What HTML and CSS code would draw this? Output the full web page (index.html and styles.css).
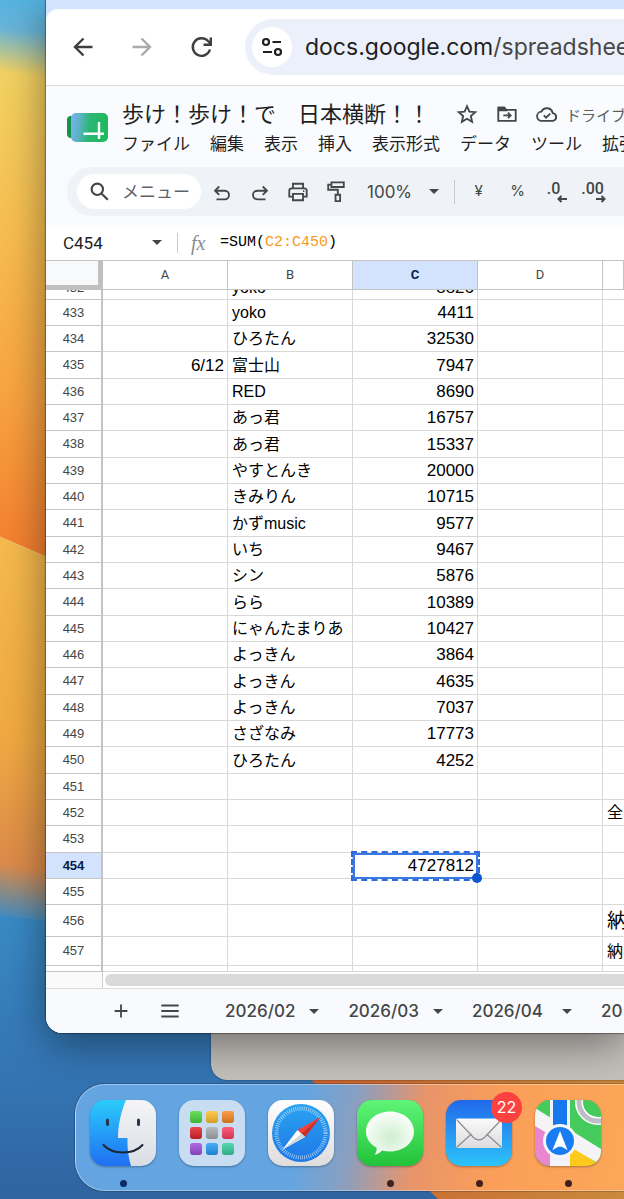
FILE: index.html
```html
<!DOCTYPE html>
<html lang="ja">
<head>
    <meta charset="UTF-8">
    <meta name="viewport" content="width=device-width, initial-scale=1.0">
    <title>歩け!歩け!で 日本横断!!</title>
    <link rel="stylesheet" href="styles.css">
</head>
<body>
    <div class="desktop">
        <svg class="wallpaper" viewBox="0 0 624 1199" preserveAspectRatio="none" aria-hidden="true">
            <defs>
                <linearGradient id="wpTop" gradientUnits="userSpaceOnUse" x1="0" y1="0" x2="-60" y2="550">
                    <stop offset="0" stop-color="#56b4e2"/>
                    <stop offset=".05" stop-color="#69b4d8"/>
                    <stop offset=".13" stop-color="#f3d262"/>
                    <stop offset=".4" stop-color="#f8bf52"/>
                    <stop offset=".7" stop-color="#f9a542"/>
                    <stop offset="1" stop-color="#f57e2e"/>
                </linearGradient>
                <linearGradient id="wpMid" gradientUnits="userSpaceOnUse" x1="0" y1="540" x2="-60" y2="920">
                    <stop offset="0" stop-color="#f6ba4e"/>
                    <stop offset=".5" stop-color="#f1aa42"/>
                    <stop offset=".83" stop-color="#dc8b4a"/>
                    <stop offset=".97" stop-color="#3f8dc3"/>
                    <stop offset="1" stop-color="#3a8dc8"/>
                </linearGradient>
                <linearGradient id="wpBlue" gradientUnits="userSpaceOnUse" x1="0" y1="900" x2="0" y2="1199">
                    <stop offset="0" stop-color="#3a8dc8"/>
                    <stop offset=".5" stop-color="#3578b7"/>
                    <stop offset="1" stop-color="#2f64a0"/>
                </linearGradient>
                <linearGradient id="wpOrange" x1="0" y1="0" x2="1" y2="0">
                    <stop offset="0" stop-color="#c9602f"/>
                    <stop offset="1" stop-color="#c98a3c"/>
                </linearGradient>
            </defs>
            <rect width="624" height="1199" fill="url(#wpBlue)"/>
            <path d="M0 537L624 800V1000L0 915z" fill="url(#wpMid)"/>
            <path d="M0 0H624V800L0 537z" fill="url(#wpTop)"/>
            <path d="M0 537L60 563" stroke="#fbc463" stroke-width="1"/>
            <path d="M290 1060L438 1199H624V1060z" fill="url(#wpOrange)"/>
        </svg>

        <div class="windows">
            <div class="back-window"></div>

            <main class="window">
                <div class="tab-strip"></div>
                <nav class="browser-bar">
                    <div class="nav-buttons">
                        <button class="nav-btn" aria-label="戻る">
                            <svg viewBox="0 0 24 24"><path d="M21.500 12H4M12.500 3.500L4 12l8.500 8.500"/></svg>
                        </button>
                        <button class="nav-btn disabled" aria-label="進む" disabled>
                            <svg viewBox="0 0 24 24"><path d="M2.500 12H20M11.500 3.500L20 12l-8.500 8.500"/></svg>
                        </button>
                        <button class="nav-btn" aria-label="再読み込み">
                            <svg viewBox="0 0 24 24"><path d="M21 14.500A8.800 8.800 0 1 1 19 6L21.500 8.500M21.800 2.500v7.300h-7.300"/></svg>
                        </button>
                    </div>
                    <div class="omnibox">
                        <button class="site-info" aria-label="サイト情報">
                            <svg viewBox="0 0 24 24"><circle cx="6" cy="7" r="3"/><path d="M12.500 7H21M3 17h9"/><circle cx="18" cy="17" r="3"/></svg>
                        </button>
                        <a class="url" href="#">docs.google.com<span>/spreadshee</span></a>
                    </div>
                </nav>

                <header class="doc-header">
                    <div class="doc-top">
                        <svg class="app-icon" viewBox="0 0 42 30" aria-hidden="true">
                            <defs>
                                <linearGradient id="sheetFill" x1="0" y1=".4" x2="1" y2=".5">
                                    <stop offset="0" stop-color="#74b3ee"/>
                                    <stop offset=".22" stop-color="#5cb3c4"/>
                                    <stop offset=".5" stop-color="#2cb673"/>
                                    <stop offset="1" stop-color="#1dba5c"/>
                                </linearGradient>
                            </defs>
                            <rect x="0" y="3" width="12" height="22" rx="4" fill="#16914a"/>
                            <rect x="4" y="0" width="37" height="29" rx="5" fill="url(#sheetFill)"/>
                            <path d="M16.500 20.800H37M32 9v17" fill="none" stroke="#fff" stroke-width="2.400"/>
                        </svg>
                        <div class="doc-info">
                            <div class="title-row">
                                <h1>歩け！歩け！で　日本横断！！</h1>
                                <button class="icon-btn" aria-label="スター">
                                    <svg viewBox="0 0 24 24"><path d="M12 3.500l2.600 5.900 6.400.6-4.800 4.200 1.400 6.300-5.600-3.300-5.600 3.300 1.400-6.300L3 10l6.400-.6z"/></svg>
                                </button>
                                <button class="icon-btn" aria-label="移動">
                                    <svg viewBox="0 0 24 24"><path d="M2.500 5h6.500l2 2.500h10.500v12h-19z"/><path d="M3 5h6l2 3H3z" fill="#444746"/><path d="M8 13.500h8M13 10.500l3 3-3 3"/></svg>
                                </button>
                                <button class="save-btn">
                                    <svg viewBox="0 0 24 24"><path d="M6.500 19.500a5 5 0 0 1-.6-10 6.500 6.500 0 0 1 12.300 1.500 4.300 4.300 0 0 1 .3 8.500z"/><path d="M8.500 13.500l2.500 2.500 4.500-4.500"/></svg>
                                    ドライブ
                                </button>
                            </div>
                            <div class="menu-row">
                                <a href="#">ファイル</a>
                                <a href="#">編集</a>
                                <a href="#">表示</a>
                                <a href="#">挿入</a>
                                <a href="#">表示形式</a>
                                <a href="#">データ</a>
                                <a href="#">ツール</a>
                                <a href="#">拡張</a>
                            </div>
                        </div>
                    </div>

                    <div class="toolbar">
                        <label class="menu-search">
                            <svg viewBox="0 0 24 24"><circle cx="9.500" cy="9.500" r="6.500"/><path d="M14.500 14.500l7 7"/></svg>
                            <input type="text" placeholder="メニュー">
                        </label>
                        <div class="tool-group">
                            <button class="icon-btn" aria-label="元に戻す">
                                <svg viewBox="0 0 24 24"><path d="M6 20h9a4.700 4.700 0 0 0 0-9.400H5M9 6L4.400 10.600 9 15.200"/></svg>
                            </button>
                            <button class="icon-btn" aria-label="やり直し">
                                <svg viewBox="0 0 24 24"><path d="M18 20H9a4.700 4.700 0 0 1 0-9.400h10M15 6l4.600 4.600L15 15.200"/></svg>
                            </button>
                            <button class="icon-btn" aria-label="印刷">
                                <svg viewBox="0 0 24 24"><path d="M6.500 8V3h11v5M6.500 17H2.500v-6.500A2.500 2.500 0 0 1 5 8h14a2.500 2.500 0 0 1 2.500 2.500V17h-4M6.500 14h11v7h-11z"/><path d="M17.500 11h1.500"/></svg>
                            </button>
                            <button class="icon-btn" aria-label="書式を貼り付け">
                                <svg viewBox="0 0 24 24"><path d="M7 1.500h13.500v5H7zM7 4H3.500v5.500H14V15M11.500 15h5v7h-5z"/></svg>
                            </button>
                        </div>
                        <button class="zoom-btn">100% <i class="caret"></i></button>
                        <div class="divider"></div>
                        <div class="format-group">
                            <button>¥</button>
                            <button>%</button>
                            <button class="decimal" aria-label="小数点以下の桁数を減らす">.0
                                <svg viewBox="0 0 10 8"><path d="M10 4H1.500M4.500 1L1.500 4l3 3"/></svg>
                            </button>
                            <button class="decimal" aria-label="小数点以下の桁数を増やす">.00
                                <svg viewBox="0 0 10 8"><path d="M0 4h8.500M5.500 1l3 3-3 3"/></svg>
                            </button>
                        </div>
                    </div>
                </header>

                <div class="formula-bar">
                    <input class="name-box" type="text" value="C454" aria-label="名前ボックス">
                    <i class="caret"></i>
                    <div class="divider"></div>
                    <span class="fx">fx</span>
                    <code class="formula">=SUM(<span>C2:C450</span>)</code>
                </div>

                <table class="sheet">
                    <colgroup>
                        <col class="col-num">
                        <col class="col-data">
                        <col class="col-data">
                        <col class="col-data">
                        <col class="col-data">
                        <col>
                    </colgroup>
                    <thead>
                        <tr><th class="corner"></th><th>A</th><th>B</th><th class="active">C</th><th>D</th><th></th></tr>
                    </thead>
                    <tbody>
                        <tr class="cut"><th><div>432</div></th><td></td><td><div>yoko</div></td><td><div>8826</div></td><td></td><td></td></tr>
                        <tr><th>433</th><td></td><td>yoko</td><td>4411</td><td></td><td></td></tr>
                        <tr><th>434</th><td></td><td>ひろたん</td><td>32530</td><td></td><td></td></tr>
                        <tr><th>435</th><td>6/12</td><td>富士山</td><td>7947</td><td></td><td></td></tr>
                        <tr><th>436</th><td></td><td>RED</td><td>8690</td><td></td><td></td></tr>
                        <tr><th>437</th><td></td><td>あっ君</td><td>16757</td><td></td><td></td></tr>
                        <tr><th>438</th><td></td><td>あっ君</td><td>15337</td><td></td><td></td></tr>
                        <tr><th>439</th><td></td><td>やすとんき</td><td>20000</td><td></td><td></td></tr>
                        <tr><th>440</th><td></td><td>きみりん</td><td>10715</td><td></td><td></td></tr>
                        <tr><th>441</th><td></td><td>かずmusic</td><td>9577</td><td></td><td></td></tr>
                        <tr><th>442</th><td></td><td>いち</td><td>9467</td><td></td><td></td></tr>
                        <tr><th>443</th><td></td><td>シン</td><td>5876</td><td></td><td></td></tr>
                        <tr><th>444</th><td></td><td>らら</td><td>10389</td><td></td><td></td></tr>
                        <tr><th>445</th><td></td><td>にゃんたまりあ</td><td>10427</td><td></td><td></td></tr>
                        <tr><th>446</th><td></td><td>よっきん</td><td>3864</td><td></td><td></td></tr>
                        <tr><th>447</th><td></td><td>よっきん</td><td>4635</td><td></td><td></td></tr>
                        <tr><th>448</th><td></td><td>よっきん</td><td>7037</td><td></td><td></td></tr>
                        <tr><th>449</th><td></td><td>さざなみ</td><td>17773</td><td></td><td></td></tr>
                        <tr><th>450</th><td></td><td>ひろたん</td><td>4252</td><td></td><td></td></tr>
                        <tr><th>451</th><td></td><td></td><td></td><td></td><td></td></tr>
                        <tr><th>452</th><td></td><td></td><td></td><td></td><td>全</td></tr>
                        <tr><th>453</th><td></td><td></td><td></td><td></td><td></td></tr>
                        <tr><th class="active">454</th><td></td><td></td><td class="selected">4727812<i class="selection"></i></td><td></td><td></td></tr>
                        <tr><th>455</th><td></td><td></td><td></td><td></td><td></td></tr>
                        <tr class="tall"><th>456</th><td></td><td></td><td></td><td></td><td class="large">納</td></tr>
                        <tr class="medium"><th>457</th><td></td><td></td><td></td><td></td><td>納</td></tr>
                        <tr class="last"><th></th><td></td><td></td><td></td><td></td><td></td></tr>
                    </tbody>
                </table>

                <div class="scroll-row">
                    <div class="scroll-corner"></div>
                    <div class="scroll-thumb"></div>
                </div>

                <footer class="sheet-tabs">
                    <button class="icon-btn" aria-label="シートを追加">
                        <svg viewBox="0 0 24 24"><path d="M12 5v14M5 12h14"/></svg>
                    </button>
                    <button class="icon-btn" aria-label="すべてのシート">
                        <svg viewBox="0 0 24 24"><path d="M2.500 6h19M2.500 12h19M2.500 18h19"/></svg>
                    </button>
                    <div class="tab-list">
                        <button class="tab">2026/02 <i class="caret"></i></button>
                        <button class="tab">2026/03 <i class="caret"></i></button>
                        <button class="tab wide">2026/04 <i class="caret"></i></button>
                        <button class="tab">20</button>
                    </div>
                </footer>
            </main>
        </div>

        <nav class="dock">
            <button class="app running" aria-label="Finder">
                <svg viewBox="0 0 66 66">
                    <defs>
                        <linearGradient id="finderBlue" x1="0" y1="0" x2="0" y2="1"><stop offset="0" stop-color="#2bcbfb"/><stop offset="1" stop-color="#1f6ff2"/></linearGradient>
                        <linearGradient id="finderWhite" x1="0" y1="0" x2="0" y2="1"><stop offset="0" stop-color="#f5f5f7"/><stop offset="1" stop-color="#d9dde4"/></linearGradient>
                        <clipPath id="tile"><rect width="66" height="66" rx="15"/></clipPath>
                    </defs>
                    <g clip-path="url(#tile)">
                        <rect width="66" height="66" fill="url(#finderBlue)"/>
                        <path d="M36 0C31 12 28 25 28 38h9.500c-.5 10 1 20 3.500 28h25V0z" fill="url(#finderWhite)"/>
                    </g>
                    <path d="M17.500 20v4.500M48.500 20v4.500" stroke="#23364b" stroke-width="3" stroke-linecap="round"/>
                    <path d="M13.500 45c9 10 30 10 39 0" fill="none" stroke="#1b2735" stroke-width="2" stroke-linecap="round"/>
                </svg>
            </button>
            <button class="app" aria-label="Launchpad">
                <svg viewBox="0 0 66 66">
                    <defs>
                        <linearGradient id="lpShade" x1="0" y1="0" x2="0" y2="1"><stop offset="0" stop-color="#fff" stop-opacity=".15"/><stop offset="1" stop-color="#000" stop-opacity=".18"/></linearGradient>
                    </defs>
                    <rect width="66" height="66" rx="15" fill="#c8dcf2"/>
                    <rect x="11" y="11" width="12" height="12" rx="3" fill="#4cd83f"/>
                    <rect x="27" y="11" width="12" height="12" rx="3" fill="#fdc02e"/>
                    <rect x="43" y="11" width="12" height="12" rx="3" fill="#f88a25"/>
                    <rect x="11" y="27" width="12" height="12" rx="3" fill="#e0242a"/>
                    <rect x="27" y="27" width="12" height="12" rx="3" fill="#a9adb0"/>
                    <rect x="43" y="27" width="12" height="12" rx="3" fill="#fb3f62"/>
                    <rect x="11" y="43" width="12" height="12" rx="3" fill="#a14fdc"/>
                    <rect x="27" y="43" width="12" height="12" rx="3" fill="#259cf5"/>
                    <rect x="43" y="43" width="12" height="12" rx="3" fill="#38cfa0"/>
                    <g fill="url(#lpShade)">
                        <rect x="11" y="11" width="12" height="12" rx="3"/><rect x="27" y="11" width="12" height="12" rx="3"/><rect x="43" y="11" width="12" height="12" rx="3"/>
                        <rect x="11" y="27" width="12" height="12" rx="3"/><rect x="27" y="27" width="12" height="12" rx="3"/><rect x="43" y="27" width="12" height="12" rx="3"/>
                        <rect x="11" y="43" width="12" height="12" rx="3"/><rect x="27" y="43" width="12" height="12" rx="3"/><rect x="43" y="43" width="12" height="12" rx="3"/>
                    </g>
                </svg>
            </button>
            <button class="app" aria-label="Safari">
                <svg viewBox="0 0 66 66">
                    <defs>
                        <linearGradient id="safariDial" x1="0" y1="0" x2="0" y2="1"><stop offset="0" stop-color="#2ba3f0"/><stop offset="1" stop-color="#1d77e6"/></linearGradient>
                        <linearGradient id="safariTile" x1="0" y1="0" x2="0" y2="1"><stop offset="0" stop-color="#fff"/><stop offset="1" stop-color="#dedcdc"/></linearGradient>
                    </defs>
                    <rect width="66" height="66" rx="15" fill="url(#safariTile)"/>
                    <circle cx="33" cy="33" r="29" fill="url(#safariDial)"/>
                    <circle cx="33" cy="33" r="24.500" fill="none" stroke="#d6ecff" stroke-width="4" stroke-dasharray=".8 1.338" opacity=".75"/>
                    <path d="M52.500 17L37 37l-7.500-7z" fill="#f2403a"/>
                    <path d="M52.500 17L37 37l-3.500-3.500z" fill="#c92f2f"/>
                    <path d="M14.500 49.500L29.500 30l7.500 7z" fill="#fff"/>
                    <path d="M14.500 49.500l19-16L37 37z" fill="#cfd6dd"/>
                </svg>
            </button>
            <button class="app running" aria-label="メッセージ">
                <svg viewBox="0 0 66 66">
                    <defs>
                        <linearGradient id="msgTile" x1="0" y1="0" x2="0" y2="1"><stop offset="0" stop-color="#5ff577"/><stop offset="1" stop-color="#22c23a"/></linearGradient>
                        <radialGradient id="msgBubble" cx=".5" cy=".6" r=".6"><stop offset="0" stop-color="#cfeecf"/><stop offset="1" stop-color="#fbfffb"/></radialGradient>
                    </defs>
                    <rect width="66" height="66" rx="15" fill="url(#msgTile)"/>
                    <path d="M33 11.500c13.500 0 24 8.800 24 20s-10.500 20-24 20c-2.800 0-5.500-.4-8-1.100-1.800 2-4.500 3.800-7.500 4.200 1.800-2 2.500-4.500 2-7C12.800 44 9 38.200 9 31.500c0-11.200 10.500-20 24-20z" fill="url(#msgBubble)"/>
                </svg>
            </button>
            <button class="app running mail" aria-label="メール">
                <svg viewBox="0 0 66 66">
                    <defs>
                        <linearGradient id="mailTile" x1="0" y1="0" x2="0" y2="1"><stop offset="0" stop-color="#2169ea"/><stop offset="1" stop-color="#2cc4fa"/></linearGradient>
                        <linearGradient id="mailPaper" x1="0" y1="0" x2="0" y2="1"><stop offset="0" stop-color="#fafafa"/><stop offset="1" stop-color="#dcdcde"/></linearGradient>
                    </defs>
                    <rect width="66" height="66" rx="15" fill="url(#mailTile)"/>
                    <rect x="10" y="18.500" width="46" height="29.500" rx="2" fill="url(#mailPaper)"/>
                    <path d="M11 47l14.500-13M55 47L40.500 34M11 20l16.500 17.500c3.500 3 7.500 3 11 0L55 20" fill="none" stroke="#8b8d91" stroke-width="1.200"/>
                </svg>
                <span class="badge">22</span>
            </button>
            <button class="app running" aria-label="マップ">
                <svg viewBox="0 0 66 66">
                    <g clip-path="url(#tile)">
                        <rect width="66" height="66" fill="#45cb5c"/>
                        <path d="M0 24L15 34V66H0z" fill="#e887cf"/>
                        <path d="M34 66V44L66 66z" fill="#fdca1c"/>
                        <path d="M0 8L66 49v16L0 26z" fill="#f4f4f6"/>
                        <path d="M15 0h20v66H15z" fill="#f1f3f8"/>
                        <path d="M18 0h14v34H18z" fill="#1778ee"/>
                        <circle cx="63" cy="2" r="19" fill="none" stroke="#fff" stroke-width="8"/>
                        <circle cx="63" cy="2" r="19" fill="none" stroke="#bcbfc6" stroke-width="5"/>
                        <circle cx="25" cy="41" r="17" fill="#f5f5f7"/>
                        <circle cx="25" cy="41" r="14" fill="#1a7cf2"/>
                        <path d="M25 31l7.500 19c-2-.4-4.500-3.500-7.500-3.500s-5.500 3.100-7.500 3.500z" fill="#fff"/>
                    </g>
                </svg>
            </button>
        </nav>
    </div>
</body>
</html>
```
FILE: styles.css
```css
* {
    margin: 0;
    padding: 0;
    box-sizing: border-box;
}

body {
    font-family: Inter, "Noto Sans CJK JP", sans-serif;
    color: #1f1f1f;
}

button {
    border: none;
    background: none;
    font: inherit;
    color: inherit;
    cursor: pointer;
}

input {
    border: none;
    outline: none;
    background: none;
    font: inherit;
    color: inherit;
}

a {
    color: inherit;
    text-decoration: none;
}

svg {
    display: block;
}

/* デスクトップ */
.desktop {
    position: relative;
    min-height: 100vh;
    padding-bottom: 8px;
    overflow: hidden;
}

.wallpaper {
    position: absolute;
    inset: 0;
    width: 100%;
    height: 100%;
}

.windows {
    position: relative;
    padding-left: 46px;
}

.back-window {
    position: absolute;
    left: 211px;
    right: 0;
    bottom: -47px;
    height: 120px;
    background: #c4c0bc;
    border-radius: 0 0 0 16px;
    box-shadow: 0 0 2px rgba(0, 0, 0, 0.6);
}

.windows::before {
    content: "";
    position: absolute;
    inset: 0 0 0 46px;
    z-index: 1;
    border-radius: 0 0 0 16px;
    box-shadow: 0 0 1px 1px rgba(0, 0, 0, 0.35), 0 10px 44px rgba(0, 0, 0, 0.45);
}

.window {
    position: relative;
    z-index: 2;
    overflow: hidden;
    background: #fff;
    border-radius: 0 0 0 16px;
}

/* ブラウザ */
.tab-strip {
    height: 20px;
    margin-bottom: -11px;
    background: #d3e3fd;
}

.browser-bar {
    position: relative;
    display: flex;
    align-items: center;
    gap: 32px;
    height: 77px;
    padding-left: 25px;
    background: #fff;
    border-bottom: 1px solid #d8dade;
    border-radius: 12px 0 0 0;
}

.nav-buttons {
    display: flex;
    gap: 35px;
}

.nav-btn svg {
    width: 24px;
    height: 24px;
    fill: none;
    stroke: #3c4043;
    stroke-width: 2.4;
}

.nav-btn.disabled svg {
    stroke: #a8aaac;
}

.omnibox {
    flex: 1;
    display: flex;
    align-items: center;
    gap: 13px;
    height: 56px;
    padding-left: 7px;
    overflow: hidden;
    background: #ecf0fa;
    border-radius: 28px 0 0 28px;
}

.site-info {
    flex: none;
    display: grid;
    place-items: center;
    width: 40px;
    height: 40px;
    background: #fff;
    border-radius: 50%;
}

.site-info svg {
    width: 24px;
    height: 24px;
    fill: none;
    stroke: #1f1f1f;
    stroke-width: 2.2;
}

.url {
    font-size: 23px;
    white-space: nowrap;
}

.url span {
    color: #474747;
}

/* ドキュメントヘッダー */
.doc-header {
    padding: 13px 0 9px 21px;
    background: #f9fbfe;
}

.doc-top {
    display: flex;
    gap: 13px;
    margin-bottom: 10px;
}

.app-icon {
    flex: none;
    width: 42px;
    height: 30px;
    margin-top: 14px;
}

.doc-info {
    flex: 1;
    min-width: 0;
    overflow: hidden;
}

.title-row {
    display: flex;
    align-items: center;
    gap: 18px;
    height: 30px;
    margin-bottom: 2px;
    white-space: nowrap;
}

h1 {
    margin-right: 8px;
    padding-bottom: 4px;
    font-size: 22px;
    font-weight: 400;
    line-height: 26px;
    font-family: "Noto Sans CJK JP", sans-serif;
}

.icon-btn svg,
.save-btn svg {
    width: 22px;
    height: 22px;
    fill: none;
    stroke: #444746;
    stroke-width: 2;
}

.save-btn {
    display: flex;
    align-items: center;
    gap: 8px;
    font-size: 15px;
    color: #5a5d5c;
}

.menu-row {
    display: flex;
    gap: 20px;
    height: 26px;
    font-size: 17px;
    line-height: 26px;
    white-space: nowrap;
}

.toolbar {
    display: flex;
    align-items: center;
    height: 49px;
    padding-left: 10px;
    overflow: hidden;
    background: #eff3f8;
    border-radius: 25px 0 0 25px;
    color: #444746;
}

.menu-search {
    flex: none;
    display: flex;
    align-items: center;
    gap: 12px;
    width: 124px;
    height: 35px;
    margin-right: 10px;
    padding-left: 12px;
    background: #fff;
    border-radius: 18px;
}

.menu-search svg {
    flex: none;
    width: 21px;
    height: 21px;
    fill: none;
    stroke: #444746;
    stroke-width: 2.4;
}

.menu-search input {
    width: 76px;
    font-size: 17px;
}

.menu-search input::placeholder {
    color: #5f6368;
}

.tool-group {
    display: flex;
    gap: 16px;
    margin-right: 20px;
}

.zoom-btn {
    display: flex;
    align-items: center;
    gap: 17px;
    margin-right: 15px;
    font-size: 17px;
}

.caret {
    width: 0;
    height: 0;
    border: 5px solid transparent;
    border-top-color: #444746;
    border-bottom: none;
}

.divider {
    flex: none;
    width: 1px;
    height: 24px;
    background: #c7cacf;
}

.format-group {
    display: flex;
    align-items: center;
    margin-left: 4px;
    font-size: 15px;
}

.format-group button {
    position: relative;
    width: 39px;
    height: 30px;
    padding-bottom: 2px;
}

.format-group .decimal {
    padding: 0 6px 6px 0;
    font-family: Roboto, sans-serif;
    font-size: 16px;
    font-weight: 500;
}

.decimal svg {
    position: absolute;
    right: 9px;
    bottom: 4px;
    width: 10px;
    height: 8px;
    fill: none;
    stroke: #444746;
    stroke-width: 2;
}

/* 数式バー */
.formula-bar {
    display: flex;
    align-items: center;
    height: 35px;
    padding-left: 17px;
}

.name-box {
    width: 89px;
    font-family: Roboto, sans-serif;
    font-size: 17px;
}

.formula-bar .divider {
    height: 20px;
    margin: 0 13px 0 15px;
}

.fx {
    width: 29px;
    font-family: "Liberation Serif", serif;
    font-size: 20px;
    font-style: italic;
    line-height: 20px;
    color: #8a8d90;
}

.formula {
    font-family: "Liberation Mono", monospace;
    font-size: 15px;
    color: #000;
}

.formula span {
    color: #f7981d;
}

/* シート */
.sheet {
    width: 100%;
    table-layout: fixed;
    border-collapse: separate;
    border-spacing: 0;
    font-family: "Liberation Sans", "Noto Sans CJK JP", sans-serif;
    color: #000;
}

.col-num {
    width: 57px;
}

.col-data {
    width: 125px;
}

.sheet th {
    font-size: 13px;
    font-weight: 400;
    line-height: 18px;
    color: #444746;
    border-right: 1px solid #c4c4c4;
    border-bottom: 1px solid #c4c4c4;
}

.sheet thead th {
    height: 30px;
    font-family: Roboto, sans-serif;
    border-top: 1px solid #c4c4c4;
}

.sheet thead .corner {
    background: #f8f9fa;
    background-clip: padding-box;
    border-right: 5px solid #c0c0c0;
    border-bottom: 5px solid #c0c0c0;
}

.sheet tbody th {
    border-right: 2px solid #c4c4c4;
}

.sheet .active {
    background: #d3e3fd;
    color: #041e49;
    font-weight: 700;
}

.sheet td {
    padding: 1px 3px 0 4px;
    border-right: 1px solid #d8d8d8;
    border-bottom: 1px solid #d8d8d8;
    font-size: 16px;
    line-height: 20px;
    white-space: nowrap;
    overflow: hidden;
}

.sheet td:nth-child(2),
.sheet td:nth-child(4) {
    font-size: 17px;
    text-align: right;
}

.sheet td:last-child {
    padding-right: 0;
    border-right: none;
}

.sheet tbody tr {
    height: 26px;
}

.sheet tbody tr:not([class]):nth-child(3n + 1) {
    height: 27px;
}

.sheet tbody .cut {
    height: 10px;
}

.sheet .cut td {
    padding-top: 0;
    padding-bottom: 0;
}

/* 見出しの下に隠れた行 */
.cut div {
    display: flex;
    flex-direction: column;
    justify-content: flex-end;
    height: 9px;
    line-height: 22px;
    overflow: hidden;
}

.sheet tbody .tall {
    height: 32px;
}

.sheet tbody .medium {
    height: 29px;
}

.sheet tbody .last {
    height: 6px;
}

.sheet .large {
    font-size: 20px;
}

.sheet .selected {
    position: relative;
    overflow: visible;
}

.selection {
    position: absolute;
    inset: 0 -1px -1px 0;
    border: 2px solid #3b78e7;
    outline: 2px dashed #2f6bd8;
}

.selection::after {
    content: "";
    position: absolute;
    right: -6px;
    bottom: -6px;
    width: 10px;
    height: 10px;
    background: #0b57d0;
    border-radius: 50%;
}

.scroll-row {
    display: flex;
    align-items: center;
    gap: 2px;
    height: 17px;
    border-bottom: 1px solid #dcdcdc;
}

.scroll-corner {
    width: 57px;
    height: 100%;
    background: #fafafa;
    border-right: 1px solid #d0d0d0;
}

.scroll-thumb {
    flex: 1;
    height: 12px;
    background: #dadada;
    border-radius: 6px 0 0 6px;
}

.sheet-tabs {
    display: flex;
    align-items: center;
    gap: 27px;
    height: 44px;
    padding-left: 64px;
    background: #f9fafe;
}

.tab-list {
    display: flex;
    flex: 1;
    gap: 29px;
    min-width: 0;
    margin-left: 17px;
    overflow: hidden;
}

.tab {
    flex: none;
    display: flex;
    align-items: center;
    gap: 14px;
    font-size: 17px;
    font-weight: 500;
    color: #444746;
}

.tab.wide {
    gap: 19px;
}

/* Dock */
.dock {
    position: relative;
    z-index: 3;
    display: flex;
    gap: 23px;
    margin: 51px -40px 0 75px;
    padding: 15px 14px 3px;
    border: 1px solid rgba(255, 255, 255, 0.35);
    border-radius: 30px;
    background: linear-gradient(100deg, #64a5e1 38%, #8a9fc0 47%, #e8946a 58%, #fb9f58 72%, #fba959 100%);
    box-shadow: 0 0 1px 1px rgba(0, 0, 0, 0.2);
}

.app {
    position: relative;
    flex: none;
    display: flex;
    flex-direction: column;
    align-items: center;
    height: 87px;
}

.app svg {
    width: 66px;
    height: 66px;
    filter: drop-shadow(0 1px 1px rgba(0, 0, 0, 0.3));
}

.running::after {
    content: "";
    width: 7px;
    height: 7px;
    margin-top: 14px;
    background: #40201c;
    border-radius: 50%;
}

.running:first-child::after {
    background: #0b2a66;
}

.badge {
    position: absolute;
    top: -8px;
    right: -10px;
    width: 31px;
    height: 31px;
    background: #fc4141;
    border-radius: 50%;
    color: #fff;
    font-size: 16px;
    line-height: 31px;
    text-align: center;
}
```
